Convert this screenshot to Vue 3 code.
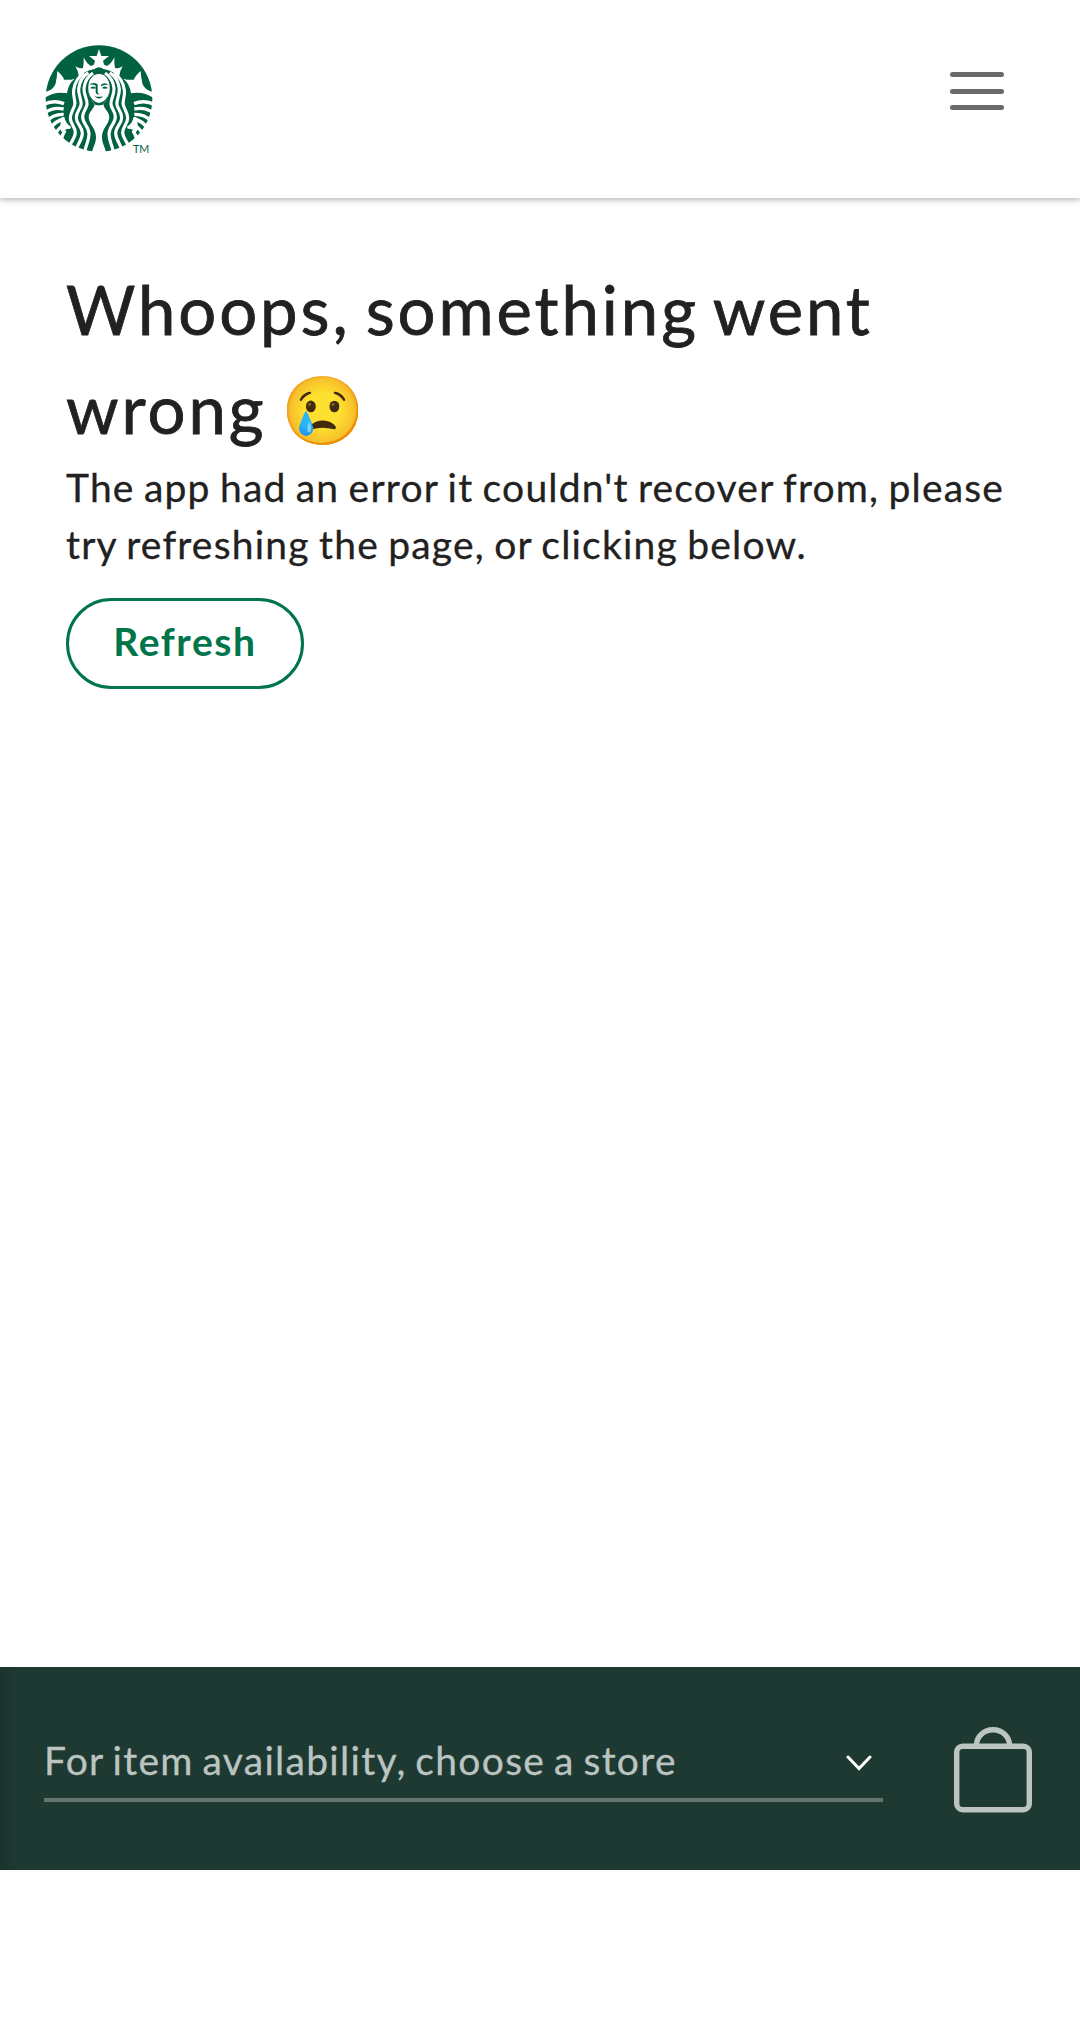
<script setup>
</script>

<template>
  <div class="page">
    <header class="header">
      <svg class="logo" viewBox="0 0 390 390" role="img" aria-label="Starbucks">
        <defs>
          <g id="half" fill="#fff">
            <path d="M67 108Q84 122 87 134Q104 136 119 131Q100 146 96 175Q60 168 28 189V172Q58 164 62 145Q66 128 67 108Z" />
            <path d="M121 94Q133 102 144 99Q147 84 146 67Q155 87 169 93Q178 88 183 85H193V101Q155 101 132 126Q130 108 121 94Z" />
            <g fill="none" stroke="#fff" stroke-width="10">
              <path d="M24 209Q55 193 87 206" />
              <path d="M28 235Q52 215 86 222" />
              <path d="M36 258Q55 237 86 238" />
              <path d="M46 281Q61 257 88 252" />
              <path d="M58 302Q70 276 94 266" />
            </g>
            <path d="M80 246H88Q92 266 108 275L106 281Q90 280 82 294L74 280Z" />
            <path d="M70 318Q76 294 90 284L94 290Q84 304 82 326Z" />
            <g fill="none" stroke="#fff" stroke-width="9.500">
              <path d="M174 114Q150 130 147 160C146 182 158 192 156 209C153 224 143 229 143 245C143 267 162 274 162 297C162 318 153 328 148 354" />
              <path d="M160 113Q134 130 131 162C130 184 141 194 138 210C134 225 124 231 124 248C124 267 142 274 142 295C141 314 131 322 122 347" />
              <path d="M147 114Q120 132 116 165C113 188 123 196 119 211C114 227 106 233 106 250C107 268 121 275 121 293C120 310 109 318 100 339" />
            </g>
            <path d="M193 117C168 117 158 140 160 166C162 188 172 200 179 207C178 221 161 230 161 247C162 269 183 280 183 306C183 325 174 335 171 353H193Z" />
          </g>
        </defs>
        <circle cx="192" cy="190.500" r="160" fill="#006241" />
        <use href="#half" />
        <use href="#half" transform="translate(384 0) scale(-1 1)" />
        <path d="M192 42L199 63H222L204 77L210 98L192 86L174 98L180 77L162 63H185Z" fill="#fff" />
        <g fill="#006241">
          <path d="M174 106Q192 88 210 106Q192 99 174 106Z" />
          <path d="M163 151Q172 138 188 148V170Q188 175 194 178Q182 179 182 170V152Q172 145 163 151Z" />
          <path d="M197 151Q208 138 221 151Q209 146 199 154Z" />
          <path d="M165 159Q174 150 184 159Q174 164 165 159ZM200 159Q210 150 219 159Q210 164 200 159Z" />
          <path d="M179 184Q192 187 205 184Q192 197 179 184Z" />
          <path d="M161 172Q170 201 192 204Q214 201 223 172L219 190L203 209Q192 212 181 209L165 190Z" />
        </g>
        <text x="294" y="353" font-size="35" fill="#006241" textLength="49" lengthAdjust="spacingAndGlyphs">TM</text>
      </svg>
      <button class="menu" type="button" aria-label="Menu"><span></span><span></span><span></span></button>
    </header>
    <main class="content">
      <h1>Whoops, something went wrong 😢</h1>
      <p>The app had an error it couldn't recover from, please try refreshing the page, or clicking below.</p>
      <button class="refresh" type="button">Refresh</button>
    </main>
    <footer class="footer">
      <div class="store">
        <span>For item availability, choose a store</span>
        <svg class="chevron" viewBox="0 0 26 16"><path d="M2 2L13 13.500L24 2" fill="none" stroke="#fff" stroke-width="3" stroke-linecap="round" /></svg>
      </div>
      <svg class="bag" viewBox="0 0 78 86" fill="none" stroke="#bbc4c1" stroke-width="5.400">
        <rect x="2.700" y="19.200" width="72.600" height="63.500" rx="6" />
        <path d="M22.500 19V18A16.500 15.300 0 0 1 55.500 18V19" />
      </svg>
    </footer>
  </div>
</template>

<style>
body { margin: 0; background: #fff; }
</style>
<style scoped>
.page {
  display: flex;
  flex-direction: column;
  height: 2022px;
  overflow: hidden;
  font-family: Lato, "Noto Color Emoji", sans-serif;
  color: #212121;
}
.header {
  display: flex;
  flex: none;
  justify-content: space-between;
  align-items: flex-start;
  box-sizing: border-box;
  height: 198px;
  padding: 35px 76px 0 35px;
  box-shadow: 0 1px 8px rgba(0, 0, 0, .12), 0 3px 6px rgba(0, 0, 0, .1), 0 2px 2px rgba(0, 0, 0, .07);
}
.logo { width: 130px; height: 130px; }
.menu {
  display: flex;
  flex-direction: column;
  gap: 11.500px;
  margin: 37px 0 0;
  padding: 0;
  border: 0;
  background: none;
}
.menu span { width: 54.500px; height: 5px; border-radius: 3px; background: #6b6b6b; }
.content { flex: none; box-sizing: border-box; height: 1469px; padding: 62px 60px 0 66px; }
h1 {
  margin: 0 0 1px;
  font-size: 67px;
  font-weight: 400;
  line-height: 99px;
  letter-spacing: 2.920px;
  word-spacing: -5px;
  -webkit-text-stroke: .8px #212121;
}
p {
  margin: 0;
  font-size: 39px;
  line-height: 57px;
  letter-spacing: 1.200px;
  word-spacing: -1.900px;
  -webkit-text-stroke: .3px #212121;
}
.refresh {
  display: block;
  box-sizing: border-box;
  width: 238px;
  height: 91px;
  margin-top: 25px;
  padding: 0 0 5px;
  border: 3px solid #00754a;
  border-radius: 46px;
  background: #fff;
  color: #00754a;
  font: 700 39px Lato, sans-serif;
  letter-spacing: 1.600px;
}
.footer {
  display: flex;
  flex: none;
  justify-content: space-between;
  align-items: flex-start;
  box-sizing: border-box;
  height: 203px;
  padding: 60px 48px 0 44px;
  background: linear-gradient(90deg, #1b332d, #1e3932 16px);
}
.store {
  display: flex;
  justify-content: space-between;
  align-items: center;
  box-sizing: border-box;
  width: 839px;
  height: 75px;
  padding: 0 11px 0 0;
  border-bottom: 4px solid #62756f;
  color: #bbc4c1;
  font-size: 39px;
  letter-spacing: 1.300px;
  word-spacing: -2.500px;
}
.store span { padding-bottom: 5px; -webkit-text-stroke: .3px #bbc4c1; }
.chevron { width: 26px; height: 16px; }
.bag { width: 78px; height: 86px; }
</style>
